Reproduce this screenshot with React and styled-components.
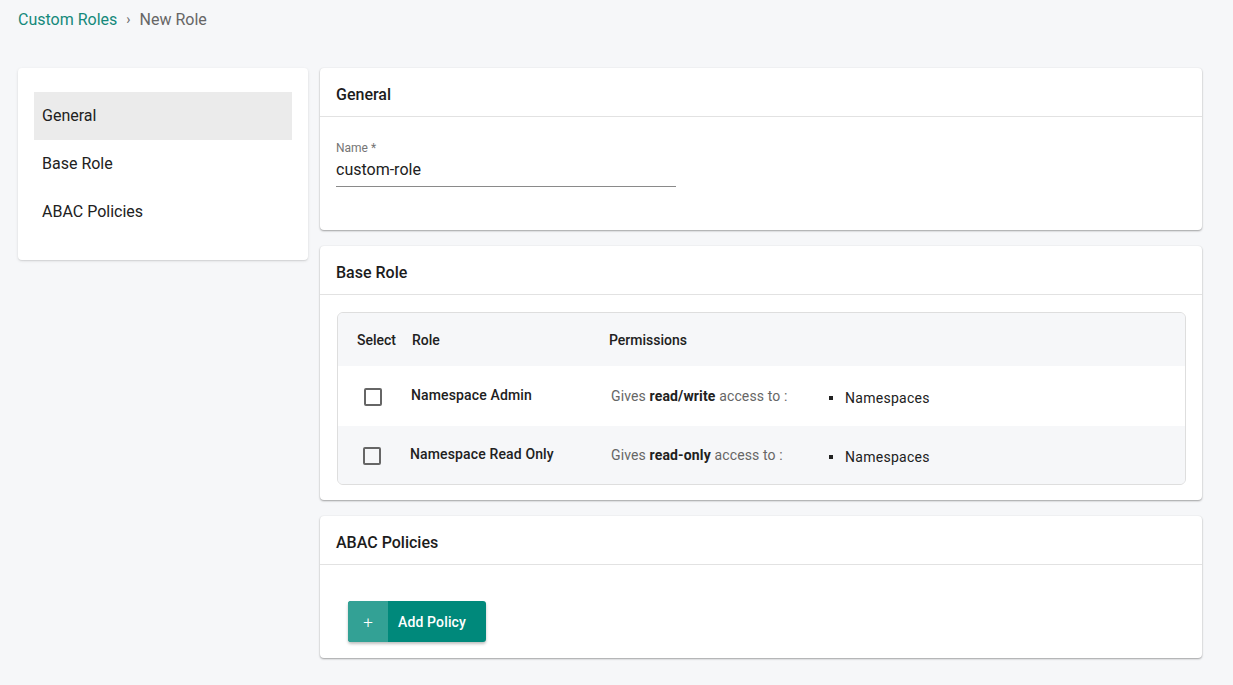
import React, { useState } from "react";
import styled, { createGlobalStyle } from "styled-components";

const GlobalStyle = createGlobalStyle`
  html, body {
    margin: 0;
    padding: 0;
    background: #f6f7f9;
    font-family: Roboto, "Liberation Sans", Arial, sans-serif;
    color: #212121;
  }
  * { box-sizing: border-box; }
`;

const NAV = ["General", "Base Role", "ABAC Policies"];

const ROLES = [
  { name: "Namespace Admin", access: "read/write", items: ["Namespaces"] },
  { name: "Namespace Read Only", access: "read-only", items: ["Namespaces"] },
];

const App = () => {
  const [active, setActive] = useState("General");
  const [checked, setChecked] = useState({});

  const toggle = (name) => setChecked({ ...checked, [name]: !checked[name] });

  return (
    <>
      <GlobalStyle />
      <Page>
        <Breadcrumb>
          <Crumb href="#">Custom Roles</Crumb>
          <Sep>›</Sep>
          <Current>New Role</Current>
        </Breadcrumb>
        <Layout>
          <SideCard>
            {NAV.map((n) => (
              <NavItem key={n} active={active === n} onClick={() => setActive(n)}>
                {n}
              </NavItem>
            ))}
          </SideCard>
          <Main>
            <Card>
              <CardHeader>General</CardHeader>
              <CardBody>
                <Field>
                  <Label>Name *</Label>
                  <Input defaultValue="custom-role" />
                </Field>
              </CardBody>
            </Card>
            <Card>
              <CardHeader>Base Role</CardHeader>
              <TableBody>
                <Table>
                  <HeadRow>
                    <HeadCell>Select</HeadCell>
                    <HeadCell>Role</HeadCell>
                    <HeadCell>Permissions</HeadCell>
                  </HeadRow>
                  {ROLES.map((r, i) => (
                    <Row key={r.name} striped={i % 2 === 1}>
                      <Cell>
                        <Check
                          shift={i}
                          checked={!!checked[r.name]}
                          onClick={() => toggle(r.name)}
                        />
                      </Cell>
                      <RoleName shift={i}>{r.name}</RoleName>
                      <Perm>
                        <PermText>
                          Gives <b>{r.access}</b> access to :
                        </PermText>
                        <PermList>
                          {r.items.map((it) => (
                            <li key={it}>{it}</li>
                          ))}
                        </PermList>
                      </Perm>
                    </Row>
                  ))}
                </Table>
              </TableBody>
            </Card>
            <Card>
              <CardHeader>ABAC Policies</CardHeader>
              <ButtonBody>
                <AddButton>
                  <Plus>+</Plus>
                  <BtnLabel>Add Policy</BtnLabel>
                </AddButton>
              </ButtonBody>
            </Card>
          </Main>
        </Layout>
      </Page>
    </>
  );
};

const Page = styled.div`
  padding: 9px 31px 26px 18px;
  min-height: 685px;
`;

const Breadcrumb = styled.div`
  display: flex;
  align-items: center;
  height: 20px;
  font-size: 16px;
  gap: 9px;
`;
const Crumb = styled.a`
  color: #14897b;
  text-decoration: none;
`;
const Sep = styled.span`
  color: #6b6b6b;
  font-size: 14px;
`;
const Current = styled.span`
  color: #666;
`;

const Layout = styled.div`
  display: flex;
  align-items: flex-start;
  gap: 12px;
  margin-top: 39px;
`;

const SideCard = styled.div`
  width: 290px;
  background: #fff;
  border-radius: 4px;
  box-shadow: 0 1px 3px rgba(0, 0, 0, 0.12), 0 1px 1px rgba(0, 0, 0, 0.06);
  padding: 24px 16px;
  display: flex;
  flex-direction: column;
`;
const NavItem = styled.div`
  height: 48px;
  display: flex;
  align-items: center;
  padding: 0 0 1px 8px;
  font-size: 16px;
  color: #212121;
  cursor: pointer;
  background: ${(p) => (p.active ? "#ebebeb" : "transparent")};
`;

const Main = styled.div`
  flex: 1;
  display: flex;
  flex-direction: column;
  gap: 16px;
`;

const Card = styled.div`
  background: #fff;
  border-radius: 4px;
  box-shadow: 0 1px 2px rgba(0, 0, 0, 0.35), 0 0 2px rgba(0, 0, 0, 0.06);
`;
const CardHeader = styled.div`
  height: 49px;
  display: flex;
  align-items: center;
  padding: 4px 16px 0;
  font-size: 16px;
  font-weight: 500;
  color: #1c1c1c;
  border-bottom: 1px solid #e2e2e2;
`;
const CardBody = styled.div`
  padding: 23px 16px 43px;
`;

const Field = styled.div`
  width: 340px;
  display: flex;
  flex-direction: column;
`;
const Label = styled.label`
  font-size: 12px;
  color: #757575;
  line-height: 16px;
`;
const Input = styled.input`
  border: 0;
  border-bottom: 1px solid #8a8a8a;
  outline: none;
  padding: 4px 0 7px;
  font-family: inherit;
  font-size: 16px;
  color: #212121;
  background: transparent;
`;

const TableBody = styled.div`
  padding: 17px 16px 15px 17px;
`;
const Table = styled.div`
  border: 1px solid #dedede;
  border-radius: 6px;
  overflow: hidden;
  background: #f6f7f9;
`;
const Grid = styled.div`
  display: grid;
  grid-template-columns: 55px 197px 1fr;
  align-items: center;
  padding-left: 19px;
`;
const HeadRow = styled(Grid)`
  height: 53px;
  background: #f6f7f9;
`;
const HeadCell = styled.div`
  font-size: 14px;
  font-weight: 500;
  color: #212121;
`;
const Row = styled(Grid)`
  height: ${(p) => (p.striped ? "58px" : "60px")};
  background: ${(p) => (p.striped ? "#f6f7f9" : "#fff")};
`;
const Cell = styled.div`
  display: flex;
  align-items: center;
`;
const Check = styled.span`
  display: inline-block;
  width: 18px;
  height: 18px;
  margin-left: ${(p) => (p.shift ? "6px" : "7px")};
  margin-top: 2px;
  border: 2px solid #666;
  border-radius: 2px;
  background: ${(p) => (p.checked ? "#00897b" : "transparent")};
  border-color: ${(p) => (p.checked ? "#00897b" : "#666")};
  cursor: pointer;
`;
const RoleName = styled.div`
  font-size: 14px;
  font-weight: 500;
  letter-spacing: 0.01em;
  color: #212121;
  margin-left: ${(p) => (p.shift ? "-2px" : "-1px")};
  margin-top: -3px;
`;
const Perm = styled.div`
  display: flex;
  align-items: center;
  padding-left: 2px;
`;
const PermText = styled.div`
  width: 218px;
  font-size: 14px;
  color: #666;
  letter-spacing: 0.01em;
  b {
    color: #212121;
    font-weight: 700;
  }
`;
const PermList = styled.ul`
  margin: 4px 0 0;
  padding: 0;
  list-style: none;
  font-size: 14px;
  color: #212121;
  letter-spacing: 0.02em;
  li {
    display: flex;
    align-items: center;
    gap: 12px;
  }
  li::before {
    content: "";
    width: 4px;
    height: 4px;
    background: #212121;
  }
`;

const ButtonBody = styled.div`
  padding: 36px 28px 16px;
`;
const AddButton = styled.button`
  display: flex;
  height: 41px;
  padding: 0;
  border: 0;
  border-radius: 3px;
  overflow: hidden;
  background: #00897b;
  color: #fff;
  font-family: inherit;
  cursor: pointer;
  box-shadow: 0 2px 3px rgba(0, 0, 0, 0.25);
`;
const Plus = styled.span`
  width: 40px;
  display: flex;
  align-items: center;
  justify-content: center;
  background: #33a195;
  font-size: 17px;
  font-weight: 300;
`;
const BtnLabel = styled.span`
  display: flex;
  align-items: center;
  padding: 0 20px 0 10px;
  font-size: 14px;
  font-weight: 500;
  letter-spacing: 0.01em;
`;

export default App;
